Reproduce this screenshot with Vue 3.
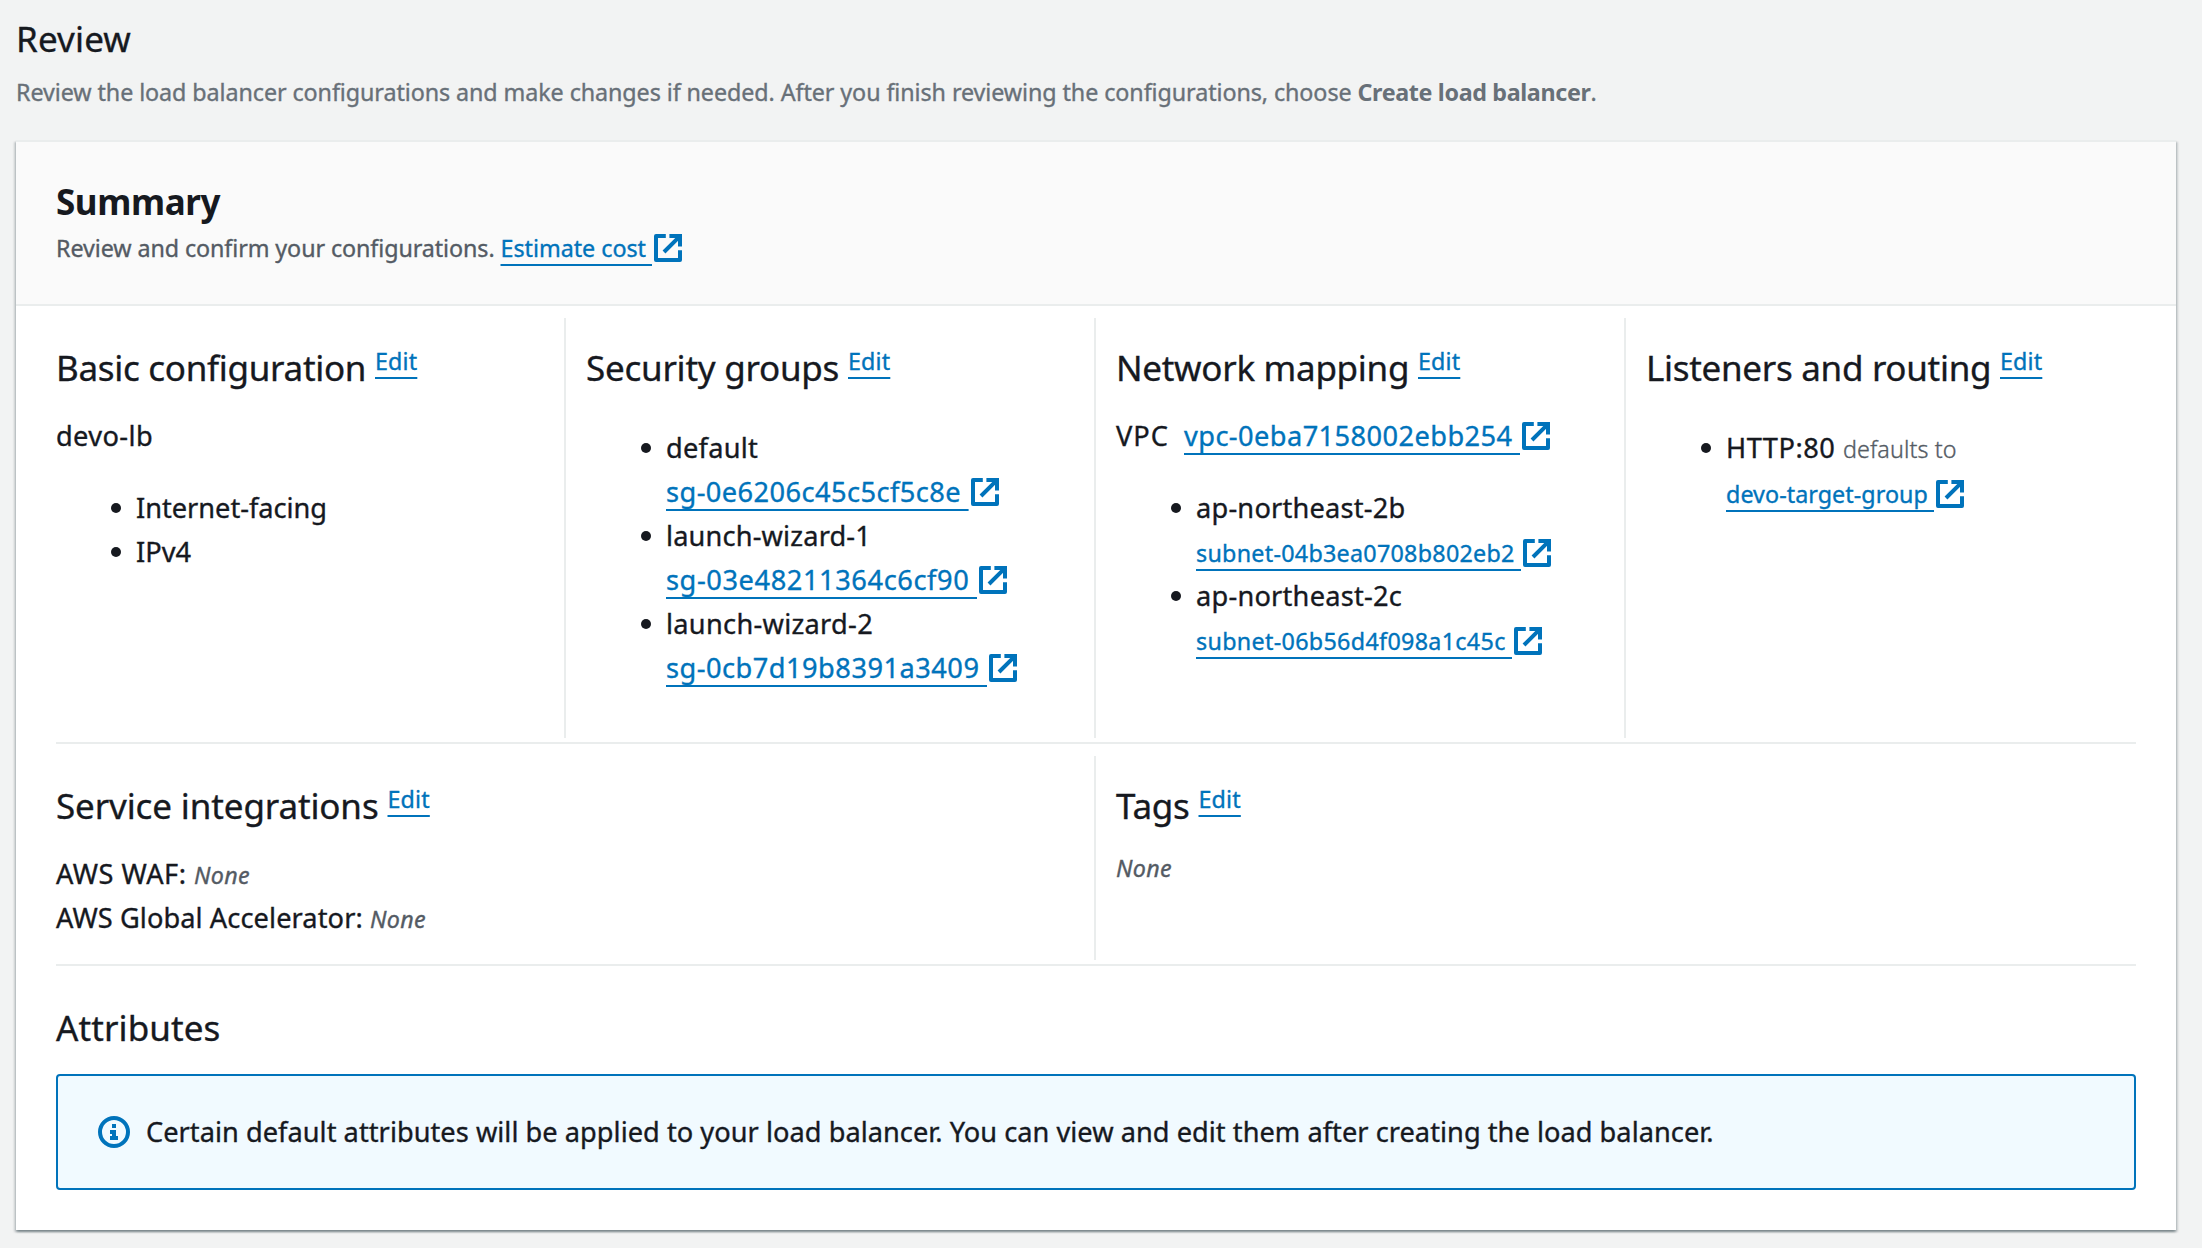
<script setup>
import { h } from 'vue'

// Tracks a run of text so that its advance equals the given width in pixels.
const vFit = {
  mounted(el, { value }) {
    const natural = el.getBoundingClientRect().width
    el.style.letterSpacing = (value - natural) / el.textContent.length + 'px'
  }
}

const ExternalIcon = () =>
  h('svg', { class: 'external', viewBox: '1 1 14 14', 'aria-hidden': 'true' }, [
    h('path', { d: 'M14 9.15V14H2V2h4.9', 'stroke-linejoin': 'round' }),
    h('path', { d: 'M8.7 2H14v5.3M6 10l7.6-7.6' })
  ])

const securityGroups = [
  { name: 'default', nameWidth: 92, id: 'sg-0e6206c45c5cf5c8e', idWidth: 302.6 },
  { name: 'launch-wizard-1', nameWidth: 205, id: 'sg-03e48211364c6cf90', idWidth: 311 },
  { name: 'launch-wizard-2', nameWidth: 207, id: 'sg-0cb7d19b8391a3409', idWidth: 321 }
]
const subnets = [
  { zone: 'ap-northeast-2b', zoneWidth: 209.5, id: 'subnet-04b3ea0708b802eb2', idWidth: 325 },
  { zone: 'ap-northeast-2c', zoneWidth: 206, id: 'subnet-06b56d4f098a1c45c', idWidth: 316 }
]
</script>

<template>
  <main class="page">
    <h2 class="title"><span v-fit="115">Review</span></h2>
    <p class="intro"><span v-fit="1341.5">{{ 'Review the load balancer configurations and make changes if needed. After you finish reviewing the configurations, choose ' }}</span><b v-fit="233">Create load balancer</b>.</p>

    <section class="card">
      <header class="card-header">
        <h2><span v-fit="164">Summary</span></h2>
        <p><span v-fit="444.5">{{ 'Review and confirm your configurations. ' }}</span><a class="link" v-fit="151.5">{{ 'Estimate cost ' }}</a><ExternalIcon /></p>
      </header>

      <div class="row row-four">
        <div class="cell">
          <h3><span v-fit="319">{{ 'Basic configuration ' }}</span><a class="link edit" v-fit="42.3">Edit</a></h3>
          <p class="line"><span v-fit="97">devo-lb</span></p>
          <ul>
            <li><span v-fit="191">Internet-facing</span></li>
            <li><span v-fit="55">IPv4</span></li>
          </ul>
        </div>
        <div class="cell">
          <h3><span v-fit="262">{{ 'Security groups ' }}</span><a class="link edit" v-fit="42.3">Edit</a></h3>
          <ul class="lead">
            <li v-for="g in securityGroups" :key="g.id">
              <span v-fit="g.nameWidth">{{ g.name }}</span>
              <div><a class="link" v-fit="g.idWidth">{{ g.id + ' ' }}</a><ExternalIcon /></div>
            </li>
          </ul>
        </div>
        <div class="cell">
          <h3><span v-fit="302">{{ 'Network mapping ' }}</span><a class="link edit" v-fit="42.3">Edit</a></h3>
          <p class="line"><span class="label" v-fit="53">VPC</span><a class="link" v-fit="336">{{ 'vpc-0eba7158002ebb254 ' }}</a><ExternalIcon /></p>
          <ul>
            <li v-for="s in subnets" :key="s.id">
              <span v-fit="s.zoneWidth">{{ s.zone }}</span>
              <div><a class="link small" v-fit="s.idWidth">{{ s.id + ' ' }}</a><ExternalIcon /></div>
            </li>
          </ul>
        </div>
        <div class="cell">
          <h3><span v-fit="354">{{ 'Listeners and routing ' }}</span><a class="link edit" v-fit="42.3">Edit</a></h3>
          <ul class="lead">
            <li>
              <span v-fit="117">{{ 'HTTP:80 ' }}</span><span class="small light" v-fit="113.5">defaults to</span>
              <div><a class="link small" v-fit="208">{{ 'devo-target-group ' }}</a><ExternalIcon /></div>
            </li>
          </ul>
        </div>
      </div>

      <div class="row row-two">
        <div class="cell">
          <h3><span v-fit="331.5">{{ 'Service integrations ' }}</span><a class="link edit" v-fit="42.3">Edit</a></h3>
          <p class="line"><span v-fit="138">{{ 'AWS WAF: ' }}</span><em v-fit="56">None</em></p>
          <p class="line next"><span v-fit="314">{{ 'AWS Global Accelerator: ' }}</span><em v-fit="56">None</em></p>
        </div>
        <div class="cell">
          <h3><span v-fit="82.5">{{ 'Tags ' }}</span><a class="link edit" v-fit="42.3">Edit</a></h3>
          <p class="empty"><em v-fit="56">None</em></p>
        </div>
      </div>

      <div class="attributes">
        <h3><span v-fit="164.5">Attributes</span></h3>
        <div class="alert">
          <svg class="info" viewBox="0 0 16 16" aria-hidden="true">
            <circle cx="8" cy="8" r="7" />
            <path d="M8 4v2M6 8h2v3M6 11h4" />
          </svg>
          <span v-fit="1567.5">Certain default attributes will be applied to your load balancer. You can view and edit them after creating the load balancer.</span>
        </div>
      </div>
    </section>
  </main>
</template>

<style>
body {
  margin: 0;
  background: #f2f3f3;
}
</style>

<style scoped>
.page {
  box-sizing: border-box;
  width: 2202px;
  height: 1248px;
  padding: 17px 26px 0 16px;
  background: #f2f3f3;
  color: #16191f;
  font: 400 27.2px/44px "Noto Sans", "Open Sans", sans-serif;
  -webkit-text-stroke: 0.35px currentColor;
  overflow: hidden;
}
h2,
h3,
p,
ul {
  margin: 0;
  padding: 0;
  white-space: nowrap;
}
h2,
h3 {
  font-size: 35px;
  line-height: 44px;
  font-weight: 400;
}
span,
a,
em,
b {
  white-space: pre;
}
b,
.card-header h2 {
  -webkit-text-stroke-width: 0;
}
.intro {
  margin-top: 11px;
  font-size: 23.3px;
  line-height: 40px;
  color: #687078;
}
.card {
  box-sizing: border-box;
  height: 1090px;
  margin-top: 28px;
  border-top: 2px solid #eaeded;
  background: #fff;
  box-shadow:
    0 2px 2px 0 rgba(0, 28, 36, 0.3),
    2px 2px 2px 0 rgba(0, 28, 36, 0.15),
    -2px 2px 2px 0 rgba(0, 28, 36, 0.15);
}
.card-header {
  box-sizing: border-box;
  height: 164px;
  padding: 38px 40px 0;
  border-bottom: 2px solid #eaeded;
  background: #fafafa;
}
.card-header h2 {
  font-weight: 700;
}
.card-header p {
  margin-top: 2px;
  font-size: 23.3px;
  color: #545b64;
}
.row {
  display: grid;
  box-sizing: border-box;
  margin: 0 40px;
  border-bottom: 2px solid #eaeded;
}
.row-four {
  grid-template-columns: 510px 530px 530px 1fr;
  height: 438px;
  padding: 12px 0 4px;
}
.row-two {
  grid-template-columns: 1040px 1fr;
  height: 222px;
  padding: 12px 0 4px;
}
.cell {
  padding: 28px 0 0 20px;
  border-right: 2px solid #eaeded;
}
.cell:first-child {
  padding-left: 0;
}
.cell:last-child {
  border-right: 0;
}
.link {
  color: #0073bb;
  text-decoration: underline 2px;
  text-underline-offset: 7px;
  text-decoration-skip-ink: none;
}
.edit {
  font-size: 23.3px;
  line-height: 0;
  vertical-align: 11px;
}
.external {
  width: 28px;
  height: 28px;
  margin-left: 2px;
  vertical-align: -5px;
  fill: none;
  stroke: #0073bb;
  stroke-width: 2;
}
.row .link:not(.small) + .external {
  vertical-align: -4px;
}
.line {
  margin-top: 24px;
}
.line.next {
  margin-top: -1px;
}
.label {
  margin-right: 15px;
}
.line + ul {
  margin-top: 28px;
}
ul {
  padding-left: 80px;
  list-style: none;
}
ul.lead {
  margin-top: 36px;
}
li > div {
  height: 44px;
}
li::before {
  content: "";
  display: inline-block;
  width: 10px;
  height: 10px;
  margin: 0 15px 0 -25px;
  border-radius: 50%;
  background: #16191f;
  vertical-align: 5px;
}
.small {
  font-size: 23.3px;
}
.light {
  font-weight: 300;
  color: #545b64;
}
em {
  font-size: 23.3px;
  color: #545b64;
}
.empty {
  margin-top: 24px;
  line-height: 33px;
  font-size: 23.3px;
}
.attributes {
  padding: 40px 40px 0;
}
.alert {
  display: flex;
  align-items: center;
  box-sizing: border-box;
  height: 116px;
  margin-top: 24px;
  padding: 0 40px;
  border: 2px solid #0073bb;
  border-radius: 4px;
  background: #f1faff;
}
.info {
  width: 32px;
  height: 32px;
  margin-right: 16px;
  fill: none;
  stroke: #0073bb;
  stroke-width: 2;
}
</style>
